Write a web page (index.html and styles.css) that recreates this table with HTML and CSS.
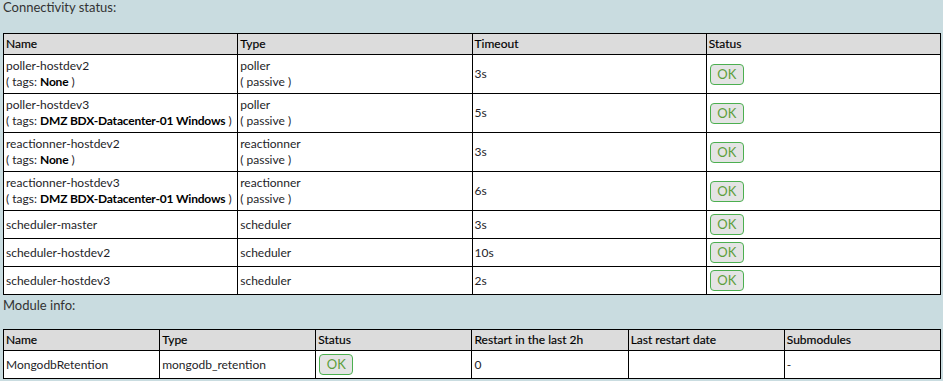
FILE: index.html
```html
<!DOCTYPE html>
<html>
<head>
<meta charset="utf-8">
<link rel="stylesheet" href="styles.css">
</head>
<body>
<div class="page">
  <div class="section-title">Connectivity status:</div>
  <table class="grid">
    <thead>
      <tr><th>Name</th><th>Type</th><th>Timeout</th><th>Status</th></tr>
    </thead>
    <tbody>
      <tr>
        <td>poller-hostdev2<br>( tags: <b>None</b> )</td>
        <td>poller<br>( passive )</td>
        <td>3s</td>
        <td><span class="ok">OK</span></td>
      </tr>
      <tr>
        <td>poller-hostdev3<br>( tags: <b>DMZ BDX-Datacenter-01 Windows</b> )</td>
        <td>poller<br>( passive )</td>
        <td>5s</td>
        <td><span class="ok">OK</span></td>
      </tr>
      <tr>
        <td>reactionner-hostdev2<br>( tags: <b>None</b> )</td>
        <td>reactionner<br>( passive )</td>
        <td>3s</td>
        <td><span class="ok">OK</span></td>
      </tr>
      <tr>
        <td>reactionner-hostdev3<br>( tags: <b>DMZ BDX-Datacenter-01 Windows</b> )</td>
        <td>reactionner<br>( passive )</td>
        <td>6s</td>
        <td><span class="ok">OK</span></td>
      </tr>
      <tr>
        <td>scheduler-master</td>
        <td>scheduler</td>
        <td>3s</td>
        <td><span class="ok">OK</span></td>
      </tr>
      <tr>
        <td>scheduler-hostdev2</td>
        <td>scheduler</td>
        <td>10s</td>
        <td><span class="ok">OK</span></td>
      </tr>
      <tr>
        <td>scheduler-hostdev3</td>
        <td>scheduler</td>
        <td>2s</td>
        <td><span class="ok">OK</span></td>
      </tr>
    </tbody>
  </table>
  <div class="section-title section-title-next">Module info:</div>
  <table class="grid">
    <thead>
      <tr><th>Name</th><th>Type</th><th>Status</th><th>Restart in the last 2h</th><th>Last restart date</th><th>Submodules</th></tr>
    </thead>
    <tbody>
      <tr>
        <td>MongodbRetention</td>
        <td>mongodb_retention</td>
        <td><span class="ok">OK</span></td>
        <td>0</td>
        <td></td>
        <td class="sub">-</td>
      </tr>
    </tbody>
  </table>
</div>
</body>
</html>
```
FILE: styles.css
```css
html, body {
  margin: 0;
  padding: 0;
  background: #c9dce0;
}
body {
  font-family: Lato, "Open Sans", sans-serif;
  font-size: 12px;
  line-height: 16px;
  color: #1e1e28;
}
.page {
  padding: 0 2px 0 3px;
}
.section-title {
  color: #333;
  font-size: 13px;
  height: 14px;
  line-height: 14px;
  padding-bottom: 19px;
}
.section-title-next {
  padding-top: 3px;
  padding-bottom: 17px;
}
.grid {
  width: 100%;
  border-collapse: collapse;
  table-layout: fixed;
  background: #fff;
}
.grid th, .grid td {
  border: 1px solid #000;
  text-align: left;
  vertical-align: middle;
  padding: 3px 2px;
  font-weight: normal;
  white-space: nowrap;
}
.grid th {
  background: #dcdcdc;
  color: #000;
  padding: 2px 2px;
  -webkit-text-stroke: 0.15px #000;
}
.grid b {
  color: #000;
  font-weight: bold;
  letter-spacing: -0.2px;
}
.ok {
  display: inline-block;
  box-sizing: border-box;
  margin-left: 1px;
  width: 34px;
  height: 21px;
  line-height: 19px;
  text-align: center;
  background: #e4e4e4;
  border: 1px solid #4caf50;
  border-radius: 4px;
  color: #5d9e3c;
  font-size: 13px;
  vertical-align: middle;
}
.sub {
  vertical-align: bottom;
}
```
